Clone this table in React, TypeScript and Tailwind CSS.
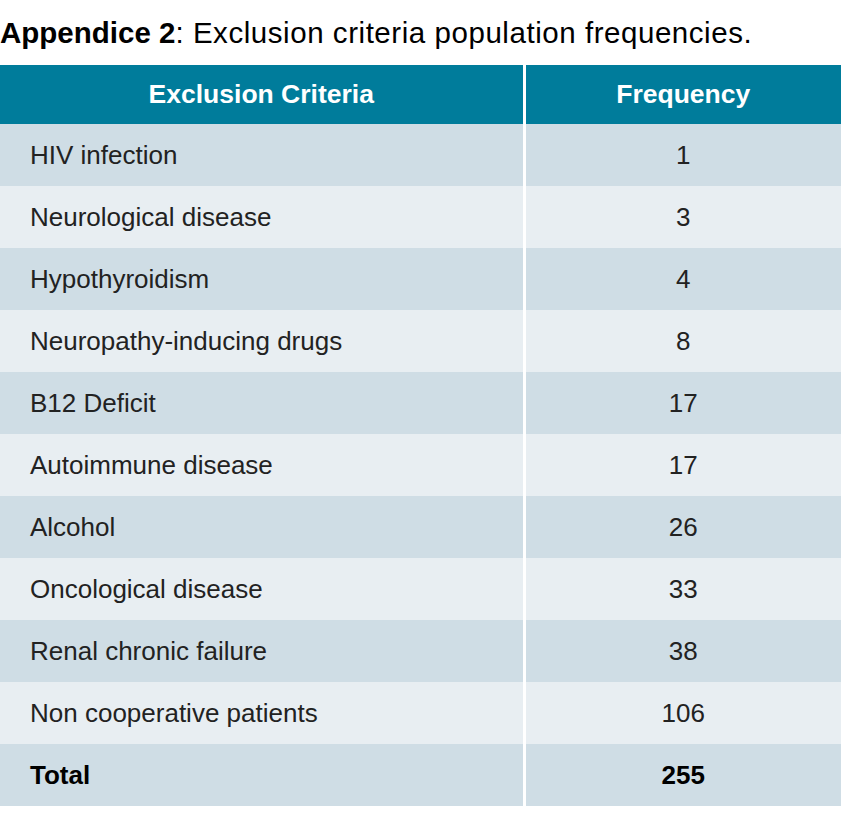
const rows: [string, string][] = [
  ['HIV infection', '1'],
  ['Neurological disease', '3'],
  ['Hypothyroidism', '4'],
  ['Neuropathy-inducing drugs', '8'],
  ['B12 Deficit', '17'],
  ['Autoimmune disease', '17'],
  ['Alcohol', '26'],
  ['Oncological disease', '33'],
  ['Renal chronic failure', '38'],
  ['Non cooperative patients', '106'],
];

export default function App() {
  return (
    <div className="w-[842px] h-[817px] bg-white text-black font-['Liberation_Sans',Arial,sans-serif]">
      <h1 className="h-[65px] pt-[16px] text-[29.5px] leading-[34px]">
        <span className="font-bold">Appendice 2</span>
        <span className="tracking-[0.55px]">: Exclusion criteria population frequencies.</span>
      </h1>
      <table className="w-[841px] border-collapse">
        <thead>
          <tr className="h-[59px] bg-[#007c9b] text-white">
            <th className="w-[524px] text-[26.5px] font-bold border-r-[3px] border-white">Exclusion Criteria</th>
            <th className="text-[26.5px] font-bold">Frequency</th>
          </tr>
        </thead>
        <tbody>
          {rows.map(([label, value], i) => (
            <tr key={label} className={`h-[62px] ${i % 2 === 0 ? 'bg-[#cfdde5]' : 'bg-[#e8eef2]'}`}>
              <td className="pl-[30px] text-[26px] text-[#222] border-r-[3px] border-white">{label}</td>
              <td className="text-center text-[26px] text-[#222]">{value}</td>
            </tr>
          ))}
          <tr className="h-[62px] bg-[#cfdde5]">
            <td className="pl-[30px] text-[26px] font-bold border-r-[3px] border-white">Total</td>
            <td className="text-center text-[26px] font-bold">255</td>
          </tr>
        </tbody>
      </table>
    </div>
  );
}
